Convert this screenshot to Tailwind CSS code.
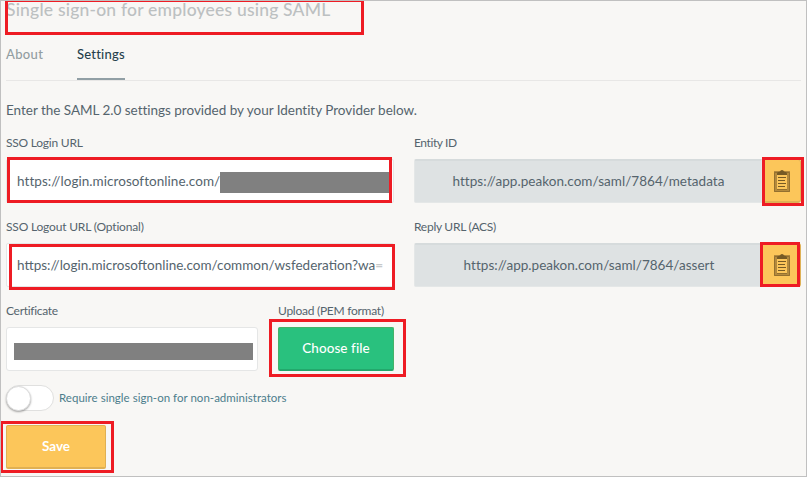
<!DOCTYPE html>
<html lang="en">
<head>
<meta charset="utf-8">
<title>Single sign-on for employees using SAML</title>
<script src="https://cdn.jsdelivr.net/npm/@tailwindcss/browser@4"></script>
</head>
<body class="relative h-[477px] w-[807px] overflow-hidden border border-[#c0c0c0] bg-[#f8f7f5] font-['Lato',sans-serif] text-[13px] text-[#55646d]">
<svg class="hidden">
  <symbol id="clipboard" viewBox="0 0 16 22">
    <path d="M1.500 2.500H14.500V20.500H1.500Z" fill="none" stroke="#b48a3d" stroke-width="3"/>
    <path d="M0.500 2.500H15.500V21.500H0.500Z" fill="none" stroke="#94702f"/>
    <path d="M3 19.500H13" stroke="#94702f"/>
    <path d="M3 5V3.500Q3 2 6 1.600Q6.300 0 8 0Q9.700 0 10 1.600Q13 2 13 3.500V5Z" fill="#765a25"/>
    <path d="M4 7.500H12M4 10.500H11M4 13.500H12M4 16.500H11" stroke="#765a25" fill="none"/>
  </symbol>
</svg>
<main class="flex w-[800px] flex-col pl-[5px]">
  <h1 class="h-[36px] whitespace-nowrap text-[17.500px] font-medium leading-[17px] tracking-[0.200px] text-[#bcc0c1]">Single sign-on for employees using SAML</h1>
  <nav class="flex h-[44px] gap-[34px] border-b border-[#e8e7e6] text-[13px] font-medium leading-[34px] text-[#929da1]">
    <a class="w-[37px] whitespace-nowrap tracking-[0.350px]">About</a>
    <a class="h-[43px] w-[48px] whitespace-nowrap border-b-2 border-[#919fa5] tracking-[0.200px] text-[#263f4c]">Settings</a>
  </nav>
  <p class="h-[55px] whitespace-nowrap pt-[19px] text-[13.500px] leading-[20px] tracking-[-0.020px]">Enter the SAML 2.0 settings provided by your Identity Provider below.</p>
  <div class="grid grid-cols-[388px_387px] gap-x-[20px]">
    <label class="flex h-[84px] flex-col">
      <span class="h-[23px] text-[12px] leading-[14px] tracking-[-0.230px]">SSO Login URL</span>
      <span class="flex h-[44px] items-center whitespace-nowrap rounded-[2px] border border-[#e5e6e6] bg-white pl-[10px] text-[13.500px]"><span class="tracking-[0.050px]">https://login.microsoftonline.com/</span><i class="ml-auto mr-[3px] mt-[2px] h-[21px] w-[170px] shrink-0 bg-[#808080]"></i></span>
    </label>
    <div class="flex h-[84px] flex-col">
      <span class="h-[23px] text-[12px] leading-[14px] tracking-[-0.400px]">Entity ID</span>
      <div class="flex h-[44px]">
        <span class="flex w-[348px] items-center justify-center rounded-l-[2px] border border-t-2 border-[#e4e7e7] border-t-[#d6dbdc] bg-[#dee2e3] pl-[1px] text-[13.500px] tracking-[0.050px]">https://app.peakon.com/saml/7864/metadata</span>
        <button class="flex w-[39px] items-center justify-center rounded-r-[3px] border border-b-2 border-[#dfb256] bg-[#fcc65a]"><svg class="h-[22px] w-[16px]"><use href="#clipboard"/></svg></button>
      </div>
    </div>
    <label class="flex h-[84px] flex-col">
      <span class="h-[23px] text-[12px] leading-[14px] tracking-[-0.180px]">SSO Logout URL (Optional)</span>
      <span class="flex h-[44px] items-center whitespace-nowrap rounded-[2px] border border-[#e5e6e6] bg-white pl-[10px] text-[13.500px]"><span>https://login.microsoftonline.com/common/wsfederation?wa<b class="font-bold text-[#c6c9ca]">=</b></span></span>
    </label>
    <div class="flex h-[84px] flex-col">
      <span class="h-[23px] text-[12px] leading-[14px] tracking-[-0.270px]">Reply URL (ACS)</span>
      <div class="flex h-[44px]">
        <span class="flex w-[348px] items-center justify-center rounded-l-[2px] border border-t-2 border-[#e4e7e7] border-t-[#d6dbdc] bg-[#dee2e3] pl-[2px] text-[13.500px] tracking-[0.030px]">https://app.peakon.com/saml/7864/assert</span>
        <button class="flex w-[39px] items-center justify-center rounded-r-[3px] border border-b-2 border-[#dfb256] bg-[#fcc65a]"><svg class="h-[22px] w-[16px]"><use href="#clipboard"/></svg></button>
      </div>
    </div>
  </div>
  <div class="flex h-[81px] gap-[20px]">
    <label class="flex w-[252px] flex-col">
      <span class="h-[23px] text-[12px] leading-[14px] tracking-[-0.300px]">Certificate</span>
      <span class="flex h-[44px] items-center rounded-[3px] border border-[#e5e6e6] bg-white pl-[7px] pt-[4px]"><i class="h-[17px] w-[239px] bg-[#808080]"></i></span>
    </label>
    <div class="flex w-[116px] flex-col">
      <span class="h-[23px] whitespace-nowrap text-[12px] leading-[14px] tracking-[-0.260px]">Upload (PEM format)</span>
      <button class="h-[44px] rounded-[2px] border border-b-2 border-[#45b268] border-b-[#23a86c] bg-[#29c17e] text-[13.500px] font-medium tracking-[0.080px] text-white">Choose file</button>
    </div>
  </div>
  <label class="flex h-[40px] gap-[5px]">
    <span class="flex h-[26px] w-[48px] rounded-full border border-[#e0e0df] bg-white"><i class="-ml-px size-[25px] rounded-full border border-[#dcdcdc] bg-white shadow-[0_1px_2px_rgba(0,0,0,0.35)]"></i></span>
    <span class="whitespace-nowrap text-[11.500px] leading-[26px] tracking-[0.020px] text-[#4c7d8c]">Require single sign-on for non-administrators</span>
  </label>
  <button class="h-[44px] w-[100px] rounded-[2px] border border-b-2 border-[#e0b052] bg-[#fcc65a] text-[13.500px] font-bold text-white">Save</button>
</main>
<div class="absolute left-[4px] top-0 h-[34px] w-[359px] border-[3px] border-t border-[#ee1c24]"></div>
<div class="absolute left-[6px] top-[156px] h-[46px] w-[385px] border-[3px] border-[#ee1c24]"></div>
<div class="absolute left-[8px] top-[243px] h-[46px] w-[386px] border-[3px] border-[#ee1c24]"></div>
<div class="absolute left-[761px] top-[156px] h-[49px] w-[42px] border-[3px] border-[#ee1c24]"></div>
<div class="absolute left-[759px] top-[241px] h-[45px] w-[40px] border-[3px] border-[#ee1c24]"></div>
<div class="absolute left-[268px] top-[318px] h-[58px] w-[137px] border-[3px] border-[#ee1c24]"></div>
<div class="absolute left-0 top-[420px] h-[52px] w-[113px] border-[3px] border-l-2 border-[#ee1c24]"></div>
</body>
</html>
